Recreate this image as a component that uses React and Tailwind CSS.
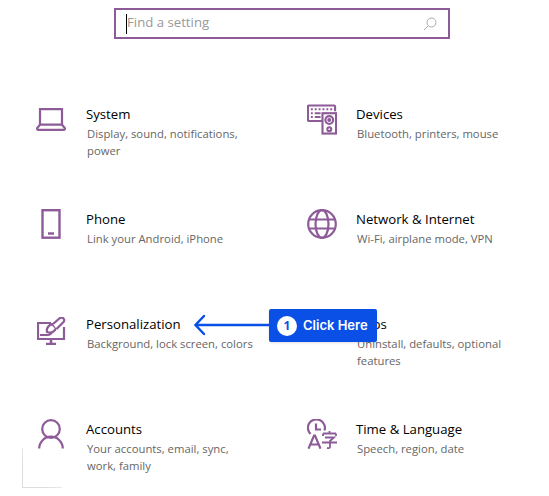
import React from "react";

const purple = "#8e5b99";

const LaptopIcon = () => (
  <svg width="30" height="23" viewBox="0 0 30 23" fill="none" stroke={purple} strokeWidth="2.200">
    <path d="M4 1.200h22v15.500H4z" />
    <path d="M4 16.700L1.200 20q-.5 1.800 1.300 1.800h25q1.800 0 1.300-1.800L26 16.700" />
  </svg>
);

const DevicesIcon = () => (
  <svg width="31" height="31" viewBox="0 0 31 31" fill="none" stroke={purple} strokeWidth="2.200">
    <path d="M16 17H2q-1 0-1-1V2q0-1 1-1h26q1 0 1 1v5" />
    <path d="M4 5h2M8 5h2M12 5h2M16 5h2M20 5h2M24 5h2M4 9h2M8 9h6M4 13h2M8 13h6" strokeWidth="2" />
    <rect x="16" y="9" width="14" height="21" fill="#fff" />
    <circle cx="23" cy="16" r="4" />
    <circle cx="23" cy="16" r="1" />
    <circle cx="23" cy="25.500" r="2" />
  </svg>
);

const PhoneIcon = () => (
  <svg width="20" height="30" viewBox="0 0 20 30" fill="none" stroke={purple} strokeWidth="2.400">
    <rect x="1.500" y="1.200" width="17" height="27.500" />
    <path d="M7 24.500h6" strokeWidth="2.500" />
  </svg>
);

const GlobeIcon = () => (
  <svg width="30" height="30" viewBox="0 0 30 30" fill="none" stroke={purple} strokeWidth="2.200">
    <circle cx="15" cy="15" r="13.800" />
    <ellipse cx="15" cy="15" rx="6.500" ry="13.800" />
    <path d="M2.500 10.500h25M2.500 19.500h25" />
  </svg>
);

const BrushIcon = () => (
  <svg width="29" height="28" viewBox="0 0 29 28" fill="none" stroke={purple} strokeWidth="2.200" className="mt-[3px] ml-px">
    <path d="M14 6H1v16h26V10" />
    <path d="M9 27h10M14 22v5" strokeWidth="2.500" />
    <path d="M3 18h7q5 0 5-5" />
    <path d="M10 15q-1-4 3-7l2-1 4 4-1 2q-3 4-8 2z" fill="#fff" />
    <path d="M16 7l7-6q2-1 3.500.5t0 3.500l-7 7" fill="#fff" />
  </svg>
);

const PersonIcon = () => (
  <svg width="26" height="30" viewBox="0 0 26 30" fill="none" stroke={purple} strokeWidth="2.200">
    <circle cx="13" cy="10" r="8.800" />
    <path d="M1.200 29.500a11.800 11.800 0 0 1 23.600 0" />
  </svg>
);

const TimeIcon = () => (
  <svg width="30" height="30" viewBox="0 0 30 30" fill="none" stroke={purple} strokeWidth="2.200">
    <path d="M3.500 15A8.500 8.500 0 1 1 17.500 11.500" />
    <path d="M9 4.500v6h5" />
    <path d="M1.500 29.700L7 16.500h1L13.500 29.700M3.500 25.500h8" />
    <path d="M16 14.500h13M22.500 12v2.500M16 14.500v2.500M29 14.500v2.500M18 18.500h9l-4 3.500v6q0 1.500-3 1M15 23.500h15" strokeWidth="1.800" />
  </svg>
);

const items = [
  { title: "System", desc: ["Display, sound, notifications,", "power"], Icon: LaptopIcon },
  { title: "Devices", desc: ["Bluetooth, printers, mouse"], Icon: DevicesIcon, right: true },
  { title: "Phone", desc: ["Link your Android, iPhone"], Icon: PhoneIcon },
  { title: "Network & Internet", desc: ["Wi-Fi, airplane mode, VPN"], Icon: GlobeIcon, right: true },
  { title: "Personalization", desc: ["Background, lock screen, colors"], Icon: BrushIcon },
  { title: "Apps", desc: ["Uninstall, defaults, optional", "features"], Icon: null, right: true },
  { title: "Accounts", desc: ["Your accounts, email, sync,", "work, family"], Icon: PersonIcon },
  { title: "Time & Language", desc: ["Speech, region, date"], Icon: TimeIcon, right: true },
];

const SettingItem = ({ title, desc, Icon, right }) => (
  <div className="flex h-[105px] items-start">
    <div className={right ? "mr-[19px] ml-px flex h-[30px] w-[30px] shrink-0 items-center justify-center" : "mr-[20px] flex h-[30px] w-[30px] shrink-0 items-center justify-center"}>
      {Icon && <Icon />}
    </div>
    <div>
      <div className="text-[13.200px] leading-[20px] text-black">{title}</div>
      <div className="pt-[0.500px] pl-px text-[11.300px] leading-[17px] text-[#666]">
        {desc.map((line) => (
          <div key={line}>{line}</div>
        ))}
      </div>
    </div>
  </div>
);

export default function App() {
  return (
    <div className="relative h-[496px] w-[549px] overflow-hidden bg-white font-['Open_Sans',sans-serif]">
      {/* Search box */}
      <div className="pt-[8px] pl-[114px]">
        <div className="flex h-[31px] w-[336px] items-center border-2 border-[#8e5b99] pr-[11px] pl-[10px]">
          <div className="h-[20px] w-px bg-black" />
          <span className="-mt-[2px] flex-1 text-[13.200px] text-[#999]">Find a setting</span>
          <svg width="14" height="14" viewBox="0 0 14 14" fill="none" stroke="#aaa" strokeWidth="1">
            <circle cx="8.500" cy="5.500" r="4.500" />
            <path d="M5.200 8.800L1 13" />
          </svg>
        </div>
      </div>

      {/* Settings grid */}
      <div className="mt-[65px] grid grid-cols-[270px_1fr] pl-[36px]">
        {items.map((item) => (
          <SettingItem key={item.title} {...item} />
        ))}
      </div>

      {/* Callout */}
      <div className="absolute top-[314px] left-[193px] flex items-center">
        <svg width="76" height="22" viewBox="0 0 76 22" fill="none" stroke="#0b50e6" strokeWidth="2.500">
          <path d="M76 11H3" />
          <path d="M11 2L2.500 11l8.500 9" strokeLinecap="round" />
        </svg>
      </div>
      <div className="absolute top-[309px] left-[269px] flex h-[33px] w-[108px] items-center gap-[6px] rounded-[2px] bg-[#0b50e6] pl-[8px] shadow-sm">
        <div className="flex h-[20px] w-[20px] items-center justify-center rounded-full bg-white text-[12px] font-bold text-[#0b50e6]">
          1
        </div>
        <span className="font-['Inter',sans-serif] text-[13px] font-semibold whitespace-nowrap text-white">
          Click Here
        </span>
      </div>

      {/* Leftover corner at bottom left */}
      <div className="absolute top-[448px] left-[22px] h-[40px] w-[40px] border-b border-l border-b-[#ddd] border-l-[#ddd] [mask-image:linear-gradient(45deg,#000_30%,transparent_90%)]" />
    </div>
  );
}
